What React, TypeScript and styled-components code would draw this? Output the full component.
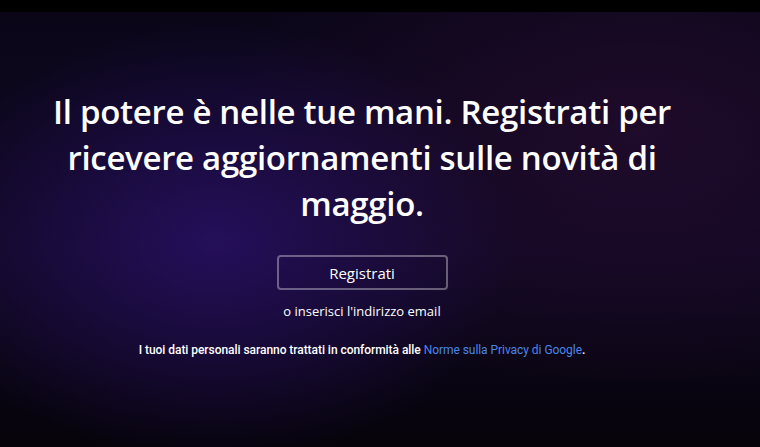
import React from 'react';
import styled, { createGlobalStyle } from 'styled-components';

const GlobalStyle = createGlobalStyle`
  html, body {
    margin: 0;
    padding: 0;
    background: #000;
  }
  body {
    font-family: "Open Sans", "Noto Sans", sans-serif;
    -webkit-font-smoothing: antialiased;
  }
`;

const Page = styled.div`
  width: 760px;
  height: 447px;
  overflow: hidden;
  background: #000;
  display: flex;
  flex-direction: column;
`;

const TopStrip = styled.div`
  height: 12px;
  background: #000;
  flex-shrink: 0;
`;

const Hero = styled.section`
  flex: 1;
  display: flex;
  flex-direction: column;
  align-items: center;
  padding: 77px 36px 0 0;
  background:
    radial-gradient(ellipse 300px 220px at 215px 230px, rgba(40, 16, 100, 0.85), rgba(40, 16, 100, 0) 100%),
    radial-gradient(ellipse 420px 260px at 640px 120px, rgba(38, 12, 48, 0.7), rgba(38, 12, 48, 0) 100%),
    linear-gradient(180deg, #0a0618 0%, #100822 55%, #06030a 100%);
`;

const Title = styled.h1`
  margin: 0;
  max-width: 690px;
  text-align: center;
  color: #fff;
  font-size: 33px;
  line-height: 46px;
  font-weight: 600;
  letter-spacing: -0.3px;
`;

const SignUpButton = styled.button`
  margin-top: 28px;
  width: 171px;
  height: 35px;
  border: 2px solid rgba(255, 255, 255, 0.35);
  border-radius: 4px;
  background: transparent;
  color: #fff;
  font-family: inherit;
  font-size: 15px;
  font-weight: 500;
  cursor: pointer;
`;

const Alt = styled.p`
  margin: 12px 0 0;
  color: #fff;
  font-size: 13px;
  font-weight: 500;
  line-height: 18px;
`;

const Legal = styled.p`
  margin: 22px 0 0;
  color: #fff;
  font-family: Roboto, "Liberation Sans", sans-serif;
  font-size: 12px;
  font-weight: 500;
  line-height: 16px;
  letter-spacing: -0.05px;
`;

const Link = styled.a`
  color: #4a86e8;
  font-weight: 400;
  text-decoration: none;
`;

export default function App() {
  return (
    <>
      <GlobalStyle />
      <Page>
        <TopStrip />
        <Hero>
          <Title>
            Il potere è nelle tue mani. Registrati per ricevere aggiornamenti sulle novità di maggio.
          </Title>
          <SignUpButton>Registrati</SignUpButton>
          <Alt>o inserisci l'indirizzo email</Alt>
          <Legal>
            I tuoi dati personali saranno trattati in conformità alle{' '}
            <Link href="#">Norme sulla Privacy di Google</Link>.
          </Legal>
        </Hero>
      </Page>
    </>
  );
}
